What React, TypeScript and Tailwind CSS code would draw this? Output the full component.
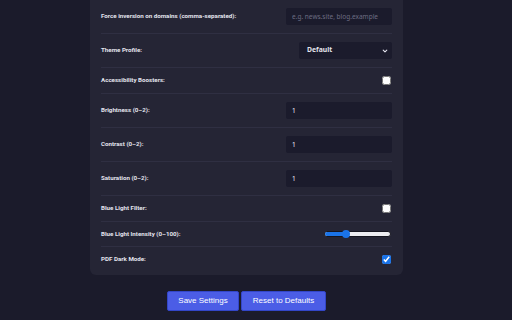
import React from "react";

const Row = ({ label, children, last }: { label: string; children: React.ReactNode; last?: boolean }) => (
  <div className={`flex items-center justify-between py-[8px] ${last ? "" : "border-b border-[#2f2f42]"}`}>
    <span className="text-[6.2px] font-bold text-[#e4e4ee] leading-none" style={{ fontFamily: "Roboto, 'Noto Sans', sans-serif" }}>{label}</span>
    {children}
  </div>
);

const TextInput = ({ value, placeholder }: { value?: string; placeholder?: string }) => (
  <input
    type="text"
    defaultValue={value}
    placeholder={placeholder}
    className="w-[106px] h-[17px] rounded-[2px] bg-[#1b1b2c] px-[6px] text-[6.5px] text-[#f0f0f6] placeholder:text-[#6c6c82] outline-none border-0"
  />
);

const Check = ({ checked }: { checked?: boolean }) => (
  <input
    type="checkbox"
    defaultChecked={checked}
    className="w-[9px] h-[9px] m-0 mr-[1px] accent-[#1a73e8]"
  />
);

const Slider = ({ pct }: { pct: number }) => (
  <div className="relative w-[67px] h-[8px] mr-[1px] flex items-center">
    <div className="w-full h-[6px] rounded-full bg-[#ececf0] border border-[#15151f] overflow-hidden flex">
      <div className="h-full bg-[#1a73e8]" style={{ width: `${pct}%` }} />
    </div>
    <div
      className="absolute top-0 w-[8px] h-[8px] rounded-full bg-[#1a73e8]"
      style={{ left: `calc(${pct}% - 4px)` }}
    />
  </div>
);

export default function App() {
  return (
    <div className="w-[512px] h-[320px] bg-[#1b1b2b] overflow-hidden" style={{ fontFamily: "'Noto Sans', 'Open Sans', sans-serif" }}>
      <div className="w-[493px] flex flex-col items-center">
        <div className="w-[313px] bg-[#252535] rounded-b-[6px] px-[11px] pb-[3px]">
          <Row label="Force inversion on domains (comma-separated):">
            <TextInput placeholder="e.g. news.site, blog.example" />
          </Row>
          <Row label="Theme Profile:">
            <div className="relative w-[93px] h-[17px] rounded-[2px] bg-[#1b1b2c] flex items-center pl-[8px] pr-[4px] justify-between">
              <span className="text-[6.8px] font-bold text-[#e4e4ee] leading-none">Default</span>
              <svg width="6" height="6" viewBox="0 0 10 10" className="text-[#e4e4ee]">
                <path d="M2 3.5 L5 6.5 L8 3.5" fill="none" stroke="currentColor" strokeWidth="1.8" strokeLinecap="round" strokeLinejoin="round" />
              </svg>
            </div>
          </Row>
          <Row label="Accessibility Boosters:">
            <Check />
          </Row>
          <Row label="Brightness (0–2):">
            <TextInput value="1" />
          </Row>
          <Row label="Contrast (0–2):">
            <TextInput value="1" />
          </Row>
          <Row label="Saturation (0–2):">
            <TextInput value="1" />
          </Row>
          <Row label="Blue Light Filter:">
            <Check />
          </Row>
          <Row label="Blue Light Intensity (0–100):">
            <Slider pct={33} />
          </Row>
          <Row label="PDF Dark Mode:" last>
            <Check checked />
          </Row>
        </div>
        <div className="flex gap-[2px] mt-[16px]" style={{ fontFamily: "'Liberation Sans', Arial, sans-serif" }}>
          <button className="w-[72px] h-[20px] rounded-[2px] bg-[#4b5de6] border border-[#3346c8] text-white text-[8px]">Save Settings</button>
          <button className="w-[85px] h-[20px] rounded-[2px] bg-[#4b5de6] border border-[#3346c8] text-white text-[8px]">Reset to Defaults</button>
        </div>
      </div>
    </div>
  );
}
